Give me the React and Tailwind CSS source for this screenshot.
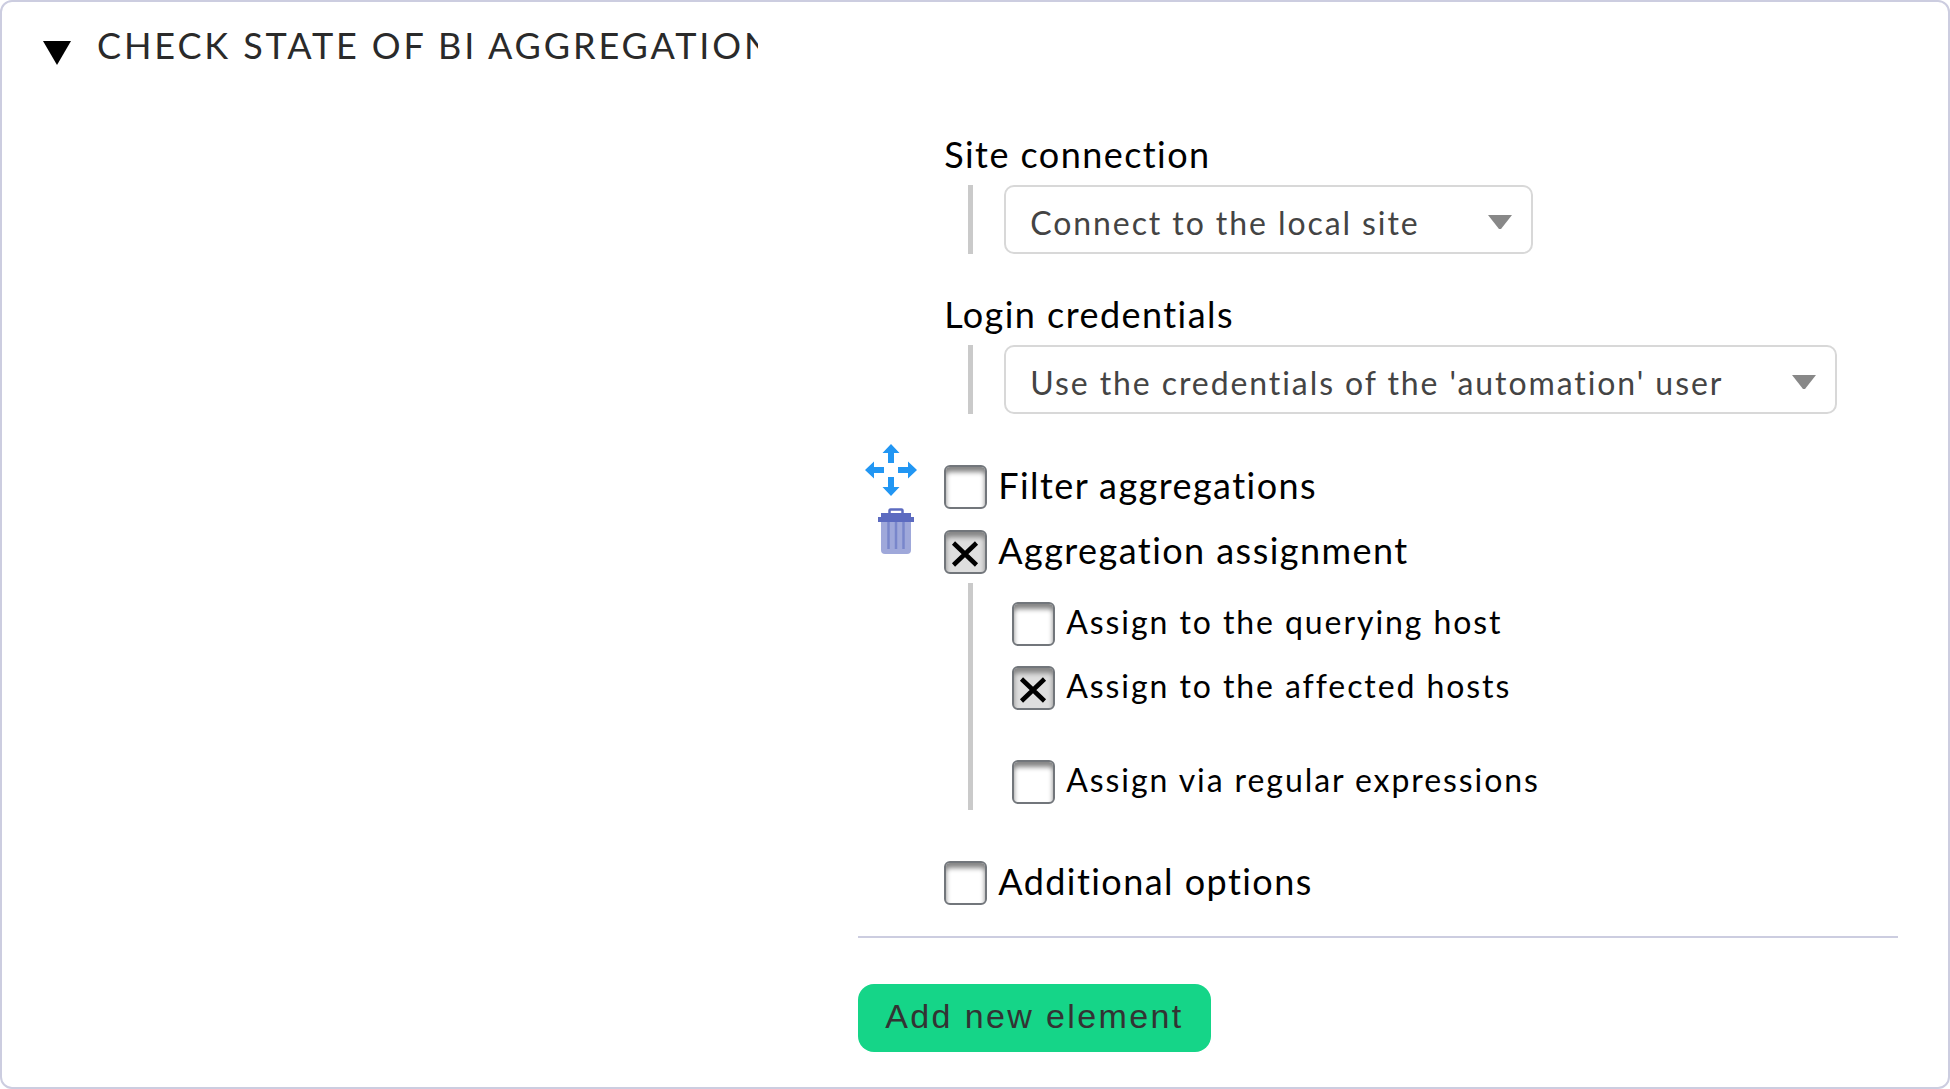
import { useId } from "react";

function SelectField({ label, option }) {
  const id = useId();
  return (
    <div className="flex flex-col gap-[11px]">
      <label htmlFor={id} className="text-[36px] leading-10 tracking-[0.04em]">
        {label}
      </label>
      <div className="ml-6 flex border-l-5 border-[#cacaca] pl-[31px]">
        <div className="relative">
          <select
            id={id}
            className="h-[69px] appearance-none rounded-[10px] border-2 border-[#d8d8d8] bg-white pt-1.5 pr-[111px] pl-6 text-[32px] tracking-[0.06em] text-[#444]"
          >
            <option>{option}</option>
          </select>
          <svg
            viewBox="0 0 24 14"
            className="pointer-events-none absolute top-[30px] right-[21px] h-3.5 w-6 fill-[#888]"
            aria-hidden="true"
          >
            <path d="M0 0h24L13 14h-2z" />
          </svg>
        </div>
      </div>
    </div>
  );
}

function Checkbox({ label, checked = false, small = false }) {
  return (
    <label className="flex items-start gap-[11px]">
      <span className="grid shrink-0">
        <input
          type="checkbox"
          defaultChecked={checked}
          className="peer col-start-1 row-start-1 h-11 w-[43px] appearance-none rounded-md border-2 border-[#72767b] bg-white shadow-[inset_0_5px_5px_#858585] checked:bg-[#dedede]"
        />
        <svg
          viewBox="0 0 43 44"
          className="pointer-events-none invisible col-start-1 row-start-1 h-11 w-[43px] peer-checked:visible"
          fill="none"
          stroke="#000"
          strokeWidth="4.5"
          aria-hidden="true"
        >
          <path d="M9.500 13l23 22M32.500 13l-23 22" />
        </svg>
      </span>
      <span
        className={
          small
            ? "text-[32px] leading-10 tracking-[0.06em]"
            : "text-[36px] leading-10 tracking-[0.04em]"
        }
      >
        {label}
      </span>
    </label>
  );
}

function MoveIcon() {
  return (
    <svg viewBox="0 0 52 52" className="size-[52px] fill-[#2196f3]" aria-hidden="true">
      <path d="M26 0l8.500 9H29v10h-6V9h-5.500z" />
      <path d="M26 52l8.500-9H29V33h-6v10h-5.500z" />
      <path d="M0 26l9-8.500V23h10v6H9v5.500z" />
      <path d="M52 26l-9-8.500V23H33v6h10v5.500z" />
    </svg>
  );
}

function TrashIcon() {
  return (
    <svg viewBox="0 0 36 46" className="h-[46px] w-9" aria-hidden="true">
      <path d="M3 13h30v29q0 4-4 4H7q-4 0-4-4z" fill="#9fa8da" />
      <path d="M10.500 14v27M18 14v27M25.500 14v27" stroke="#7986cb" strokeWidth="2.500" />
      <path d="M11.500 6V2.500q0-1 1-1h11q1 0 1 1V6" fill="none" stroke="#5c6bc0" strokeWidth="2.500" />
      <path d="M3 5h30v4h3v5H0V9h3z" fill="#5c6bc0" />
    </svg>
  );
}

export default function App() {
  return (
    <section className="flex min-h-screen rounded-xl border-2 border-[#cccde0] bg-white font-['Lato',sans-serif] text-black">
      <header className="w-[44%] shrink-0 pt-[23px] pr-[100px]">
        <button type="button" className="flex w-full items-start gap-[26px] pl-[41px] text-left">
          <svg viewBox="0 0 28 24" className="mt-4 h-6 w-7 shrink-0" aria-hidden="true">
            <path d="M0 0h28L14 24z" />
          </svg>
          <span className="min-w-0 overflow-hidden text-[36px] leading-10 tracking-[0.08em] whitespace-nowrap text-[#2a2a2a]">
            CHECK STATE OF BI AGGREGATION
          </span>
        </button>
      </header>

      <div className="min-w-0 flex-1 pt-[60px] pr-[50px] pb-[35px]">
        <div className="flex items-center border-b-2 border-[#cccde0]">
          <div className="flex w-[86px] shrink-0 flex-col gap-3 pl-[7px]">
            <button type="button" aria-label="Move this entry" className="self-start">
              <MoveIcon />
            </button>
            <button type="button" aria-label="Delete this entry" className="ml-[13px] self-start">
              <TrashIcon />
            </button>
          </div>

          <div className="min-w-0 flex-1 pt-[72px] pb-[31px]">
            <div className="mb-[51px] flex flex-col gap-10">
              <SelectField label="Site connection" option="Connect to the local site" />
              <SelectField
                label="Login credentials"
                option="Use the credentials of the 'automation' user"
              />
            </div>

            <div className="flex flex-col gap-[21px]">
              <Checkbox label="Filter aggregations" />
              <Checkbox label="Aggregation assignment" checked />
            </div>
            <div className="mt-[9px] mb-[51px] ml-6 flex flex-col gap-5 border-l-5 border-[#cacaca] pt-[19px] pb-1.5 pl-[39px]">
              <Checkbox label="Assign to the querying host" small />
              <Checkbox label="Assign to the affected hosts" checked small />
              <div className="pt-[30px]">
                <Checkbox label="Assign via regular expressions" small />
              </div>
            </div>
            <Checkbox label="Additional options" />
          </div>
        </div>

        <button
          type="button"
          className="mt-[46px] h-[68px] rounded-2xl bg-[#15d588] px-[27px] pb-1 font-['Liberation_Sans',sans-serif] text-[34px] tracking-[0.07em] text-[#333]"
        >
          Add new element
        </button>
      </div>
    </section>
  );
}
